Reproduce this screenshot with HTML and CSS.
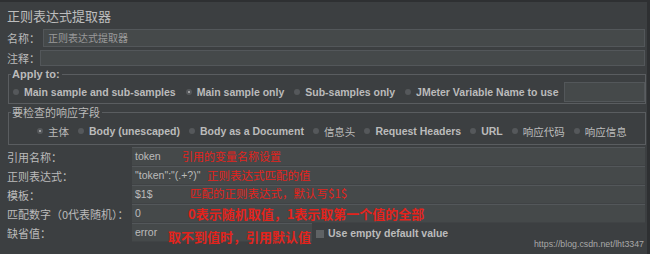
FILE: index.html
```html
<!DOCTYPE html>
<html>
<head>
<meta charset="utf-8">
<link rel="stylesheet" href="styles.css">
</head>
<body>
<div class="panel">
  <div class="title">正则表达式提取器</div>
  <div class="row name-row">
    <span class="lbl lbl-name">名称：</span>
    <div class="field name-field">正则表达式提取器</div>
  </div>
  <div class="row comment-row">
    <span class="lbl lbl-comment">注释：</span>
    <div class="field"></div>
  </div>
  <fieldset class="group apply">
    <legend>Apply to:</legend>
    <div class="radios">
      <span class="radio"><i class="dot"></i>Main sample and sub-samples</span>
      <span class="radio"><i class="dot on"></i>Main sample only</span>
      <span class="radio"><i class="dot"></i>Sub-samples only</span>
      <span class="radio"><i class="dot"></i>JMeter Variable Name to use</span>
      <div class="field var-field"></div>
    </div>
  </fieldset>
  <fieldset class="group scope">
    <legend>要检查的响应字段</legend>
    <div class="radios scope-radios">
      <span class="radio cjk"><i class="dot on"></i>主体</span>
      <span class="radio"><i class="dot"></i>Body (unescaped)</span>
      <span class="radio"><i class="dot"></i>Body as a Document</span>
      <span class="radio cjk"><i class="dot"></i>信息头</span>
      <span class="radio"><i class="dot"></i>Request Headers</span>
      <span class="radio"><i class="dot"></i>URL</span>
      <span class="radio cjk"><i class="dot"></i>响应代码</span>
      <span class="radio cjk"><i class="dot"></i>响应信息</span>
    </div>
  </fieldset>
  <div class="form">
    <div class="frow">
      <span class="flbl">引用名称：</span>
      <div class="fval">token<span class="note n1">引用的变量名称设置</span></div>
    </div>
    <div class="frow">
      <span class="flbl">正则表达式：</span>
      <div class="fval">"token":"(.+?)"<span class="note n2">正则表达式匹配的值</span></div>
    </div>
    <div class="frow">
      <span class="flbl">模板：</span>
      <div class="fval">$1$<span class="note n3">匹配的正则表达式，默认写$1$</span></div>
    </div>
    <div class="frow">
      <span class="flbl">匹配数字（0代表随机）：</span>
      <div class="fval">0<span class="note bold n4">0表示随机取值，1表示取第一个值的全部</span></div>
    </div>
    <div class="frow">
      <span class="flbl">缺省值：</span>
      <div class="fval short">error<span class="note bold n5">取不到值时，引用默认值</span></div>
      <span class="check"></span>
      <span class="check-text">Use empty default value</span>
    </div>
  </div>
  <div class="watermark">https://blog.csdn.net/lht3347</div>
</div>
</body>
</html>
```
FILE: styles.css
```css
html, body {
  margin: 0;
  padding: 0;
  background: #3c3f41;
}
body {
  width: 650px;
  height: 254px;
  overflow: hidden;
}
.panel {
  position: relative;
  box-sizing: border-box;
  width: 650px;
  height: 254px;
  border-top: 2px solid #2e3032;
  border-right: 3px solid #2e3032;
  padding: 0 2px 0 7px;
  color: #bbbbbb;
  font-family: "Noto Sans CJK SC", "Liberation Sans", sans-serif;
}
.title {
  height: 27px;
  line-height: 27px;
  font-size: 13px;
  color: #bdbdbd;
}
.row {
  display: flex;
  align-items: stretch;
}
.name-row { height: 18px; }
.comment-row { height: 16px; margin-top: 3px; }
.lbl {
  font-size: 11px;
  line-height: 16px;
  display: flex;
  align-items: center;
}
.lbl-name { width: 36px; }
.lbl-comment { width: 33px; }
.field {
  flex: 1;
  box-sizing: border-box;
  background: #45494a;
  border: 1px solid #53575a;
}
.name-field {
  font-size: 10px;
  color: #9a9a9a;
  line-height: 16px;
  padding-left: 4px;
}
.group {
  margin: 1px -1px 0 1px;
  border: 1px solid #5a5d60;
  padding: 1px 0 1px 4px;
}
.group legend {
  padding: 0 2px 0 1px;
  margin-left: -2px;
  line-height: 14px;
  font-size: 11px;
}
.apply legend {
  font-family: "Liberation Sans", sans-serif;
  font-weight: bold;
}
.radios {
  display: flex;
  align-items: center;
  height: 20px;
}
.radio {
  display: flex;
  align-items: center;
  font-family: "Liberation Sans", sans-serif;
  font-weight: bold;
  font-size: 10.5px;
  margin-right: 10px;
  white-space: nowrap;
}
.radio.cjk {
  font-family: "Noto Sans CJK SC", sans-serif;
  font-weight: normal;
  font-size: 10.5px;
}
.dot {
  width: 6px;
  height: 6px;
  border-radius: 50%;
  background: #55585b;
  margin-right: 5px;
  position: relative;
}
.dot.on::after {
  content: "";
  position: absolute;
  left: 2px;
  top: 2px;
  width: 2px;
  height: 2px;
  border-radius: 50%;
  background: #b5b5b5;
}
.var-field {
  height: 20px;
  margin-left: -5px;
  margin-right: 0;
}
.scope { padding: 2px 0 3px 4px; }
.scope-radios { padding-left: 24px; }
.scope-radios .radio { margin-right: 9px; }
.form {
  margin-top: 2px;
}
.frow {
  position: relative;
  display: flex;
  align-items: center;
  height: 19px;
}
.flbl {
  width: 125px;
  font-size: 11px;
  flex: none;
}
.fval {
  position: relative;
  flex: 1;
  height: 19px;
  box-sizing: border-box;
  background: #45494a;
  border-top: 1px solid #53575a;
  border-bottom: 1px solid #404345;
  padding-left: 3px;
  font-family: "Liberation Sans", sans-serif;
  font-size: 10.5px;
  line-height: 17px;
  color: #bbbbbb;
}
.fval.short {
  flex: none;
  width: 180px;
}
.note {
  position: absolute;
  top: 0;
  white-space: nowrap;
  color: #e3231c;
  font-family: "Noto Sans CJK SC", sans-serif;
  font-size: 11px;
  line-height: 17px;
}
.note.bold {
  font-weight: bold;
  font-size: 13px;
}
.n1 { left: 50px; }
.n2 { left: 75px; font-size: 11.5px; }
.n3 { left: 58px; font-size: 11.5px; top: -1px; }
.n4 { left: 56px; top: 0; }
.n5 { left: 36px; top: 4px; }
.check {
  width: 8px;
  height: 8px;
  background: #5f6264;
  margin-left: 4px;
  margin-right: 4px;
  margin-top: 2px;
}
.check-text {
  font-family: "Liberation Sans", sans-serif;
  font-weight: bold;
  font-size: 10.5px;
}
.watermark {
  position: absolute;
  right: 3px;
  bottom: 5px;
  font-family: "Liberation Sans", sans-serif;
  font-size: 8.8px;
  color: #a8a8a8;
}
```
